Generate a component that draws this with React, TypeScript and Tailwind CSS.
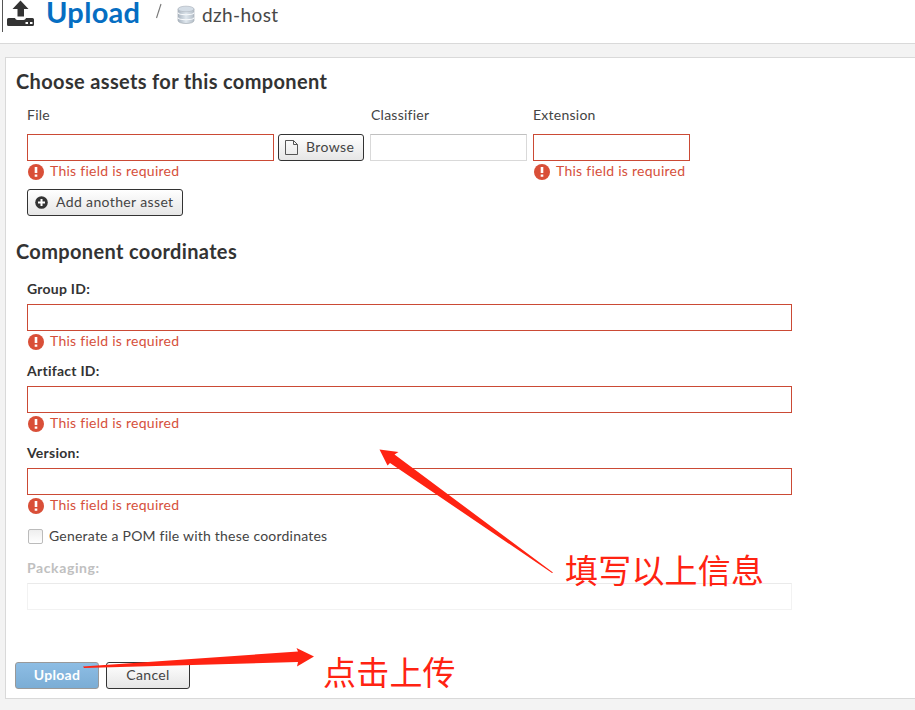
import React from 'react';

function ErrorMark() {
  return (
    <svg className="block h-4 w-4 shrink-0" viewBox="0 0 16 16">
      <circle cx="8" cy="8" r="8" fill="#d94f38" />
      <path d="M6.7 3h2.6v6.100H6.7zM6.700 10.400h2.600v2.400H6.700z" fill="#fff" />
    </svg>
  );
}

function FieldError() {
  return (
    <div className="flex h-5 items-center gap-[6px] pl-[1px] pt-[1px] text-[#d6503b]">
      <ErrorMark />
      <span className="-mt-[2px] whitespace-nowrap text-[14px] leading-5 tracking-[0.26px]">This field is required</span>
    </div>
  );
}

function RequiredField({ label }: { label: string }) {
  return (
    <div className="w-[765px]">
      <div className="mb-[5px] text-[14px] font-bold leading-5 tracking-[0.25px]">{label}</div>
      <div className="h-[27px] border border-[#cb4a35] bg-white" />
      <FieldError />
    </div>
  );
}

const button = 'flex h-[27px] items-center rounded-[3px] border border-[#333] bg-linear-to-b from-white to-[#e6e6e6] text-[14px] tracking-[0.37px] text-[#444]';

export default function App() {
  return (
    <div className="relative h-[710px] w-[915px] overflow-hidden bg-[#f3f3f3] font-[Lato,sans-serif] text-[#333]">
      <header className="flex h-11 border-b border-[#d9d9d9] bg-white pl-[2px]">
        <div className="h-8 w-px bg-[#555]" />
        <svg className="ml-1 block h-[27px] w-[27px]" viewBox="0 0 27 27" fill="#333">
          <path d="M13.500 0.500L21.500 9H17v7.500H10.500V9H5.500z" />
          <path fillRule="evenodd" d="M1.500 18H8c.4 1.300 1.300 2 2.500 2h6c1.200 0 2.100-.7 2.500-2h6.500Q27 18 27 19.500V24.500Q27 26 25.500 26h-24Q0 26 0 24.500v-5Q0 18 1.500 18zM18.500 22v2h2.500v-2zM23 22v2h2.500v-2z" />
        </svg>
        <h1 className="-mt-[6px] ml-[12px] w-[95px] whitespace-nowrap text-[29px] font-bold leading-9 tracking-[0.3px] text-[#066ec2]">Upload</h1>
        <svg className="ml-[14px] mt-[3px] h-[17px] w-[7px]" viewBox="0 0 7 17">
          <path d="M6 1L1.500 15" stroke="#777" strokeWidth="1.100" fill="none" />
        </svg>
        <svg className="ml-[15px] mt-[5px] h-5 w-[18px]" viewBox="0 0 18 20">
          <defs>
            <linearGradient id="db">
              <stop offset="0" stopColor="#a9b4c0" />
              <stop offset=".5" stopColor="#dfe7ee" />
              <stop offset="1" stopColor="#b4bec8" />
            </linearGradient>
          </defs>
          <path d="M1 4v11.500c0 4 16 4 16 0V4z" fill="url(#db)" stroke="#a5adb5" strokeWidth=".7" />
          <ellipse cx="9" cy="4" rx="8" ry="2.800" fill="#d4dde6" stroke="#b5bdc5" strokeWidth=".8" />
          <path d="M1 7.500c0 3 16 3 16 0M1 12.500c0 3 16 3 16 0" fill="none" stroke="#f8fafc" strokeWidth="1.100" />
        </svg>
        <span className="ml-[7px] mt-[3px] whitespace-nowrap text-[19px] leading-6 tracking-[0.4px] text-[#484848]">dzh-host</span>
      </header>

      <main className="ml-[5px] mt-[13px] h-[642px] w-[930px] border border-[#d9d9d9] bg-white pt-[11px]">
        <h2 className="pl-[10px] text-[20px] font-bold leading-6 tracking-[0.35px]">
          <span>Choose assets for this component</span>
        </h2>
        <section className="mt-[12px] pl-[21px]">
          <div className="flex items-start">
            <div className="w-[247px]">
              <div className="mb-[9px] text-[14px] leading-5 tracking-[0.25px] text-[#444]">File</div>
              <div className="h-[27px] border border-[#cb4a35]" />
              <FieldError />
            </div>
            <button className={`${button} ml-1 mt-[29px] w-[86px] pl-[6px]`}>
              <svg className="h-[15px] w-[13px]" viewBox="0 0 13 15" fill="none" stroke="#555">
                <path d="M.5.5h8l4 4v10H.5zM8.500.5v4h4" />
              </svg>
              <span className="-mt-[2px] ml-[8px]">Browse</span>
            </button>
            <div className="ml-[6px] w-[157px]">
              <div className="mb-[9px] pl-[1px] text-[14px] leading-5 tracking-[0.25px] text-[#444]">Classifier</div>
              <div className="h-[27px] border border-[#d9d9d9] border-t-[#c0c0c0]" />
            </div>
            <div className="ml-[6px] w-[157px]">
              <div className="mb-[9px] text-[14px] leading-5 tracking-[0.25px] text-[#444]">Extension</div>
              <div className="h-[27px] border border-[#cb4a35]" />
              <FieldError />
            </div>
          </div>
          <button className={`${button} mt-2 w-[156px] pl-[7px]`}>
            <svg className="h-[13px] w-[13px] shrink-0" viewBox="0 0 13 13">
              <circle cx="6.500" cy="6.500" r="6.300" fill="#333" />
              <path d="M6.500 3v7M3 6.500h7" stroke="#fff" strokeWidth="2" />
            </svg>
            <span className="-mt-[2px] ml-[8px] whitespace-nowrap">Add another asset</span>
          </button>
        </section>

        <h2 className="mt-[23px] pl-[10px] text-[20px] font-bold leading-6 tracking-[0.35px]">
          <span>Component coordinates</span>
        </h2>
        <section className="mt-[16px] flex flex-col gap-[10px] pl-[21px]">
          <RequiredField label="Group ID:" />
          <RequiredField label="Artifact ID:" />
          <RequiredField label="Version:" />
        </section>
        <div className="mt-[11px] flex h-5 items-center pl-[22px] text-[14px]">
          <div className="mt-[1px] h-[15px] w-[15px] rounded-[2px] border border-[#bbb] bg-linear-to-b from-[#eee] to-white" />
          <span className="-mt-[2px] ml-[6px] whitespace-nowrap tracking-[0.22px] text-[#444]">Generate a POM file with these coordinates</span>
        </div>
        <div className="mt-3 w-[786px] pl-[21px]">
          <div className="mb-[5px] text-[14px] font-bold leading-5 tracking-[0.6px] text-[#c0c0c0]">Packaging:</div>
          <div className="h-[27px] border border-[#f2f2f2] border-t-[#eaeaea]" />
        </div>
        <div className="mt-[52px] flex gap-[7px] pl-[9px]">
          <button className="flex h-[27px] w-[84px] items-center justify-center rounded-[3px] border border-[#999] bg-linear-to-b from-[#8dbde4] to-[#7badd5] text-[14px] font-bold tracking-[0.3px] text-white">
            <span className="-mt-[3px]">Upload</span>
          </button>
          <button className={`${button} w-[84px] justify-center`}>
            <span className="-mt-[3px]">Cancel</span>
          </button>
        </div>
      </main>

      <svg className="pointer-events-none absolute inset-0 h-[710px] w-[915px]" viewBox="0 0 915 710" fill="#ff2312">
        <path d="M379.500 449.500L398.500 452L394.500 454.500L553 572.500L552 573L390 463L387.500 465.500Z" />
        <path d="M83 666.500L298 651.500L296.500 648L314 656.500L297 666.500L298 662L84 668Z" />
      </svg>
      <div className="absolute left-[565px] top-[546px] whitespace-nowrap font-['Noto_Sans_CJK_SC',sans-serif] text-[33px] leading-[46px] tracking-[0.2px] text-[#ff2312]">填写以上信息</div>
      <div className="absolute left-[323px] top-[648px] whitespace-nowrap font-['Noto_Sans_CJK_SC',sans-serif] text-[33px] leading-[46px] tracking-[0.2px] text-[#ff2312]">点击上传</div>
    </div>
  );
}
